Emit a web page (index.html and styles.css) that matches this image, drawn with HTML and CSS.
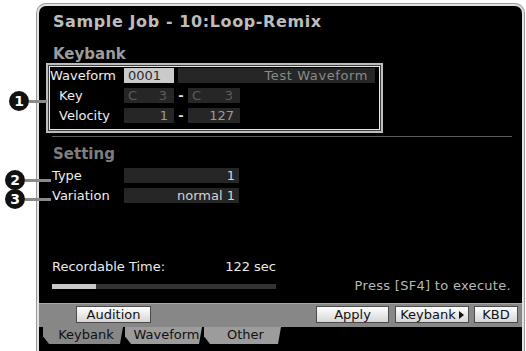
FILE: index.html
```html
<!DOCTYPE html>
<html>
<head>
<meta charset="utf-8">
<link rel="stylesheet" href="styles.css">
</head>
<body>
<div class="page">
  <div class="screen">
    <div class="title">Sample Job - 10:Loop-Remix</div>
    <div class="heading">Keybank</div>
    <div class="kbox">
      <div class="row">
        <span class="lbl">Waveform</span>
        <span class="fld light w50">0001</span>
        <span class="fld name">Test Waveform</span>
      </div>
      <div class="row">
        <span class="lbl ind">Key</span>
        <span class="fld dim w50 split"><span>C</span><span>3</span></span>
        <span class="dash">-</span>
        <span class="fld dim w52 split"><span>C</span><span>3</span></span>
      </div>
      <div class="row">
        <span class="lbl ind">Velocity</span>
        <span class="fld mid w50 num">1</span>
        <span class="dash">-</span>
        <span class="fld mid w52 num">127</span>
      </div>
    </div>
    <div class="sep"></div>
    <div class="heading setting">Setting</div>
    <div class="sgroup">
      <div class="srow"><span class="slbl">Type</span><span class="fld sval">1</span></div>
      <div class="srow"><span class="slbl">Variation</span><span class="fld sval">normal 1</span></div>
    </div>
    <div class="info">
      <div class="rec">
        <div class="recline"><span>Recordable Time:</span><span>122 sec</span></div>
        <div class="bar"><div class="fill" style="width:44px"></div></div>
      </div>
      <div class="press">Press [SF4] to execute.</div>
    </div>
    <div class="band">
      <div class="btn audition">Audition</div>
      <div class="grow"></div>
      <div class="btn apply">Apply</div>
      <div class="btn kbank">Keybank<span class="tri"></span></div>
      <div class="btn kbd">KBD</div>
    </div>
    <div class="tabs">
      <div class="tab sel">Keybank</div>
      <div class="tab">Waveform</div>
      <div class="tab">Other</div>
    </div>
  </div>

  <div class="callout c1"><span class="dot">1</span><span class="lead l1"></span></div>
  <div class="callout c2"><span class="dot">2</span><span class="lead l2"></span></div>
  <div class="callout c3"><span class="dot">3</span><span class="lead l2"></span></div>
</div>
</body>
</html>
```
FILE: styles.css
```css
* { box-sizing: border-box; }
body {
  margin: 0;
  background: #fff;
  width: 526px;
  height: 351px;
  overflow: hidden;
  font-family: "DejaVu Sans", "Liberation Sans", sans-serif;
}
.page { position: relative; height: 351px; }

.screen {
  margin: 4px 0 0 37px;
  width: 487px;
  height: 360px;
  border: 2px solid #e2e2e2;
  border-bottom: 0;
  border-radius: 9px 9px 0 0;
  box-shadow: 0 0 0 1px #9a9a9a;
  background: #000;
  display: flex;
  flex-direction: column;
  overflow: hidden;
}

.title {
  margin: 6px 0 0 14px;
  height: 20px;
  line-height: 20px;
  font-size: 16px;
  font-weight: bold;
  color: #bdbdbd;
  letter-spacing: 0.6px;
}
.heading {
  margin: 14px 0 0 14px;
  height: 16px;
  line-height: 16px;
  font-size: 15px;
  font-weight: bold;
  color: #9c9c9c;
}
.heading.setting { margin-top: 9px; color: #7e7e7e; }

.kbox {
  margin: 1px 0 0 7px;
  width: 337px;
  border: 2px solid #bdbdbd;
  box-shadow: inset 0 0 0 1px #3c3c3c, inset 0 0 0 2px #e6e6e6;
  padding: 3px 0 8px 2px;
  display: flex;
  flex-direction: column;
  gap: 5px;
}
.row { display: flex; height: 15px; }
.lbl {
  width: 74px;
  font-size: 13px;
  line-height: 15px;
  color: #eeeeee;
  white-space: nowrap;
}
.lbl.ind { padding-left: 9px; }
.fld {
  font-size: 13px;
  line-height: 15px;
  background: #262626;
  white-space: nowrap;
}
.w50 { width: 50px; }
.w52 { width: 52px; }
.light { background: #cacaca; color: #2a2a2a; padding-left: 4px; }
.name {
  margin-left: 4px;
  width: 197px;
  text-align: right;
  padding-right: 7px;
  color: #8a8a8a;
  letter-spacing: 0.6px;
}
.split { display: flex; justify-content: space-between; padding: 0 7px 0 4px; }
.dim { color: #5c5c5c; }
.mid { color: #9a9a9a; }
.num { text-align: right; padding-right: 6px; }
.dash {
  width: 14px;
  text-align: center;
  font-size: 13px;
  font-weight: bold;
  line-height: 15px;
  color: #e0e0e0;
}

.sep {
  margin: 3px 0 0 13px;
  width: 460px;
  height: 1px;
  background: #5c5c5c;
}

.sgroup { margin-top: 6px; display: flex; flex-direction: column; gap: 5px; }
.srow { display: flex; height: 15px; }
.slbl {
  margin-left: 13px;
  width: 72px;
  font-size: 13px;
  line-height: 15px;
  color: #eeeeee;
}
.sval {
  width: 115px;
  text-align: right;
  padding-right: 4px;
  color: #d4d4d4;
}

.info { margin-top: 57px; display: flex; justify-content: space-between; }
.rec { margin-left: 13px; width: 224px; }
.recline {
  display: flex;
  justify-content: space-between;
  height: 14px;
  line-height: 14px;
  font-size: 13px;
  color: #eaeaea;
}
.bar { margin-top: 10px; height: 5px; background: #333; }
.fill { height: 5px; background: #c8c8c8; }
.press {
  margin: 19px 11px 0 0;
  height: 14px;
  line-height: 14px;
  font-size: 13px;
  color: #b8b8b8;
  letter-spacing: 0.3px;
}

.band {
  margin-top: 10px;
  height: 24px;
  background: #878787;
  border-top: 1px solid #a8a8a8;
  display: flex;
  align-items: flex-start;
  padding: 2px 4px 0 37px;
  gap: 6px;
}
.grow { flex: 1; }
.btn {
  height: 17px;
  line-height: 15px;
  font-size: 13px;
  color: #111;
  text-align: center;
  background: linear-gradient(#ffffff, #d6d6d6);
  border: 1px solid #4a4a4a;
  white-space: nowrap;
}
.audition { width: 75px; }
.apply { width: 73px; }
.kbank { width: 74px; }
.kbd { width: 44px; margin-left: -1px; }
.tri {
  display: inline-block;
  margin-left: 3px;
  width: 0;
  height: 0;
  border-top: 4px solid transparent;
  border-bottom: 4px solid transparent;
  border-left: 5px solid #111;
}

.tabs { display: flex; margin-left: 4px; height: 17px; gap: 2px; }
.tab {
  width: 77px;
  height: 17px;
  line-height: 16px;
  font-size: 13px;
  color: #111;
  background: #9c9c9c;
  text-align: center;
  padding-left: 6px;
  clip-path: polygon(0 0, 100% 0, calc(100% - 3px) 100%, 6px 100%, 0 55%);
}
.tab.sel { background: #878787; width: 80px; }

.callout { position: absolute; display: flex; align-items: center; }
.c1 { left: 9px; top: 87px; }
.c2 { left: 5px; top: 166px; }
.c3 { left: 5px; top: 185px; }
.dot {
  width: 20px;
  height: 20px;
  border-radius: 50%;
  background: #111;
  color: #fff;
  font-size: 14px;
  font-weight: bold;
  line-height: 20px;
  text-align: center;
}
.lead { height: 3px; background: #8a8a8a; }
.l1 { width: 18px; }
.l2 { width: 26px; }
```
